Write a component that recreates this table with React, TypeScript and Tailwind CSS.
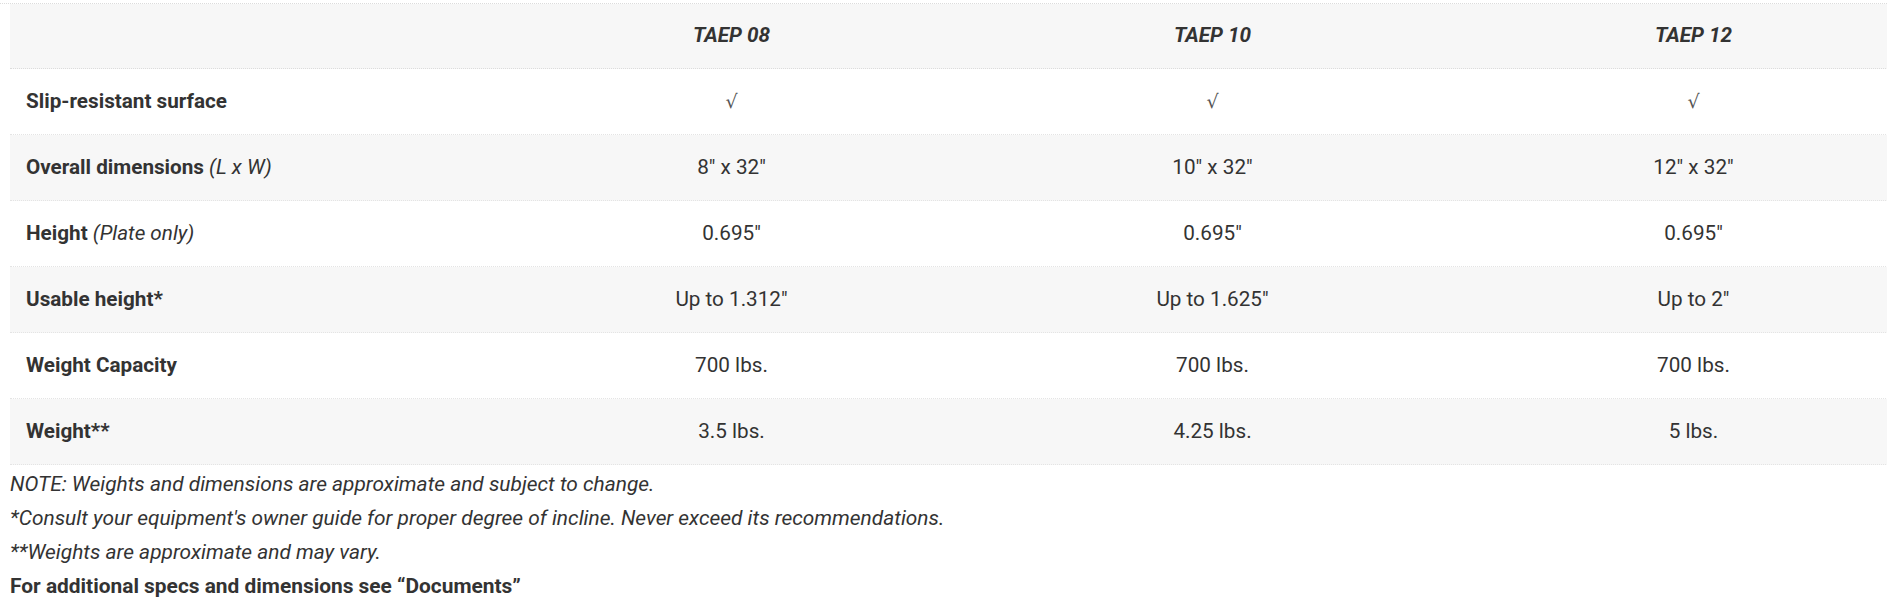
const models = ["TAEP 08", "TAEP 10", "TAEP 12"];

type Row = {
  label: string;
  note?: string;
  values: string[];
  check?: boolean;
};

const rows: Row[] = [
  { label: "Slip-resistant surface", values: ["√", "√", "√"], check: true },
  { label: "Overall dimensions", note: "(L x W)", values: ['8" x 32"', '10" x 32"', '12" x 32"'] },
  { label: "Height", note: "(Plate only)", values: ['0.695"', '0.695"', '0.695"'] },
  { label: "Usable height*", values: ['Up to 1.312"', 'Up to 1.625"', 'Up to 2"'] },
  { label: "Weight Capacity", values: ["700 lbs.", "700 lbs.", "700 lbs."] },
  { label: "Weight**", values: ["3.5 lbs.", "4.25 lbs.", "5 lbs."] },
];

export default function App() {
  return (
    <div className="w-full overflow-hidden bg-white pt-[3px] font-['Roboto',sans-serif] text-[20.7px] text-[#333]">
      <div className="border-t border-dotted border-[#dcdcdc]" />

      <div className="ml-[10px] w-[1924px]">
        <div className="grid h-[65px] grid-cols-4 items-center border-b border-dotted border-[#dcdcdc] bg-[#f7f7f7]">
          <div />
          {models.map((m) => (
            <div key={m} className="text-center font-bold italic">
              {m}
            </div>
          ))}
        </div>

        {rows.map((row, i) => (
          <div
            key={row.label}
            className={`grid h-[66px] grid-cols-4 items-center border-b border-dotted border-[#e4e4e4] ${
              i % 2 === 1 ? "bg-[#f7f7f7]" : "bg-white"
            }`}
          >
            <div className="pl-4">
              <span className="font-bold">{row.label}</span>
              {row.note && <span className="italic"> {row.note}</span>}
            </div>
            {row.values.map((v, j) => (
              <div
                key={j}
                className={
                  row.check
                    ? "text-center font-['DejaVu_Serif',serif] text-[19px] font-light text-[#555]"
                    : "text-center"
                }
              >
                {v}
              </div>
            ))}
          </div>
        ))}
      </div>

      <div className="ml-[10px] mt-[2px] text-[20.9px] leading-[34px]">
        <p className="italic">NOTE: Weights and dimensions are approximate and subject to change.</p>
        <p className="italic">*Consult your equipment's owner guide for proper degree of incline. Never exceed its recommendations.</p>
        <p className="italic">**Weights are approximate and may vary.</p>
        <p className="font-bold">For additional specs and dimensions see “Documents”</p>
      </div>
    </div>
  );
}
